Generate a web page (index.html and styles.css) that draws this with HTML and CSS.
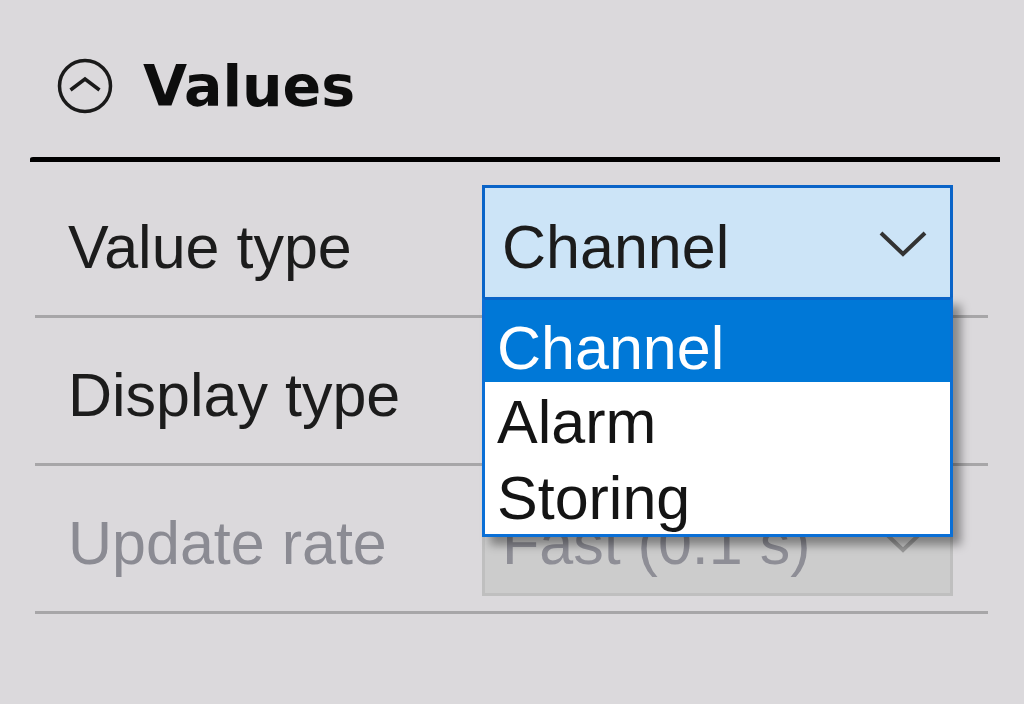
FILE: index.html
```html
<!DOCTYPE html>
<html>
<head>
<meta charset="utf-8">
<link rel="stylesheet" href="styles.css">
</head>
<body>
<div class="panel">
  <div class="header">
    <svg class="collapse-icon" width="56" height="56" viewBox="0 0 56 56">
      <circle cx="28" cy="28" r="25.5" fill="none" stroke="#1a1a1a" stroke-width="3.5"/>
      <path d="M13.5 32 L28 21 L42.5 32" fill="none" stroke="#1a1a1a" stroke-width="3.5"/>
    </svg>
    <div class="title">Values</div>
  </div>
  <div class="rule"></div>
  <div class="rows">
    <div class="row">
      <div class="label">Value type</div>
      <div class="combo-wrap">
        <div class="combo combo-open">
          <span class="combo-text">Channel</span>
          <svg class="chevron" width="48" height="26" viewBox="0 0 48 26">
            <path d="M2 2 L24 23 L46 2" fill="none" stroke="#333" stroke-width="4"/>
          </svg>
        </div>
        <div class="popup">
          <div class="item item-first selected">Channel</div>
          <div class="item">Alarm</div>
          <div class="item">Storing</div>
        </div>
      </div>
    </div>
    <div class="row">
      <div class="label">Display type</div>
      <div class="combo-wrap">
        <div class="combo">
          <span class="combo-text"></span>
          <svg class="chevron" width="48" height="26" viewBox="0 0 48 26">
            <path d="M2 2 L24 23 L46 2" fill="none" stroke="#333" stroke-width="4"/>
          </svg>
        </div>
      </div>
    </div>
    <div class="row">
      <div class="label disabled">Update rate</div>
      <div class="combo-wrap">
        <div class="combo combo-disabled">
          <span class="combo-text">Fast (0.1 s)</span>
          <svg class="chevron" width="48" height="26" viewBox="0 0 48 26">
            <path d="M2 2 L24 23 L46 2" fill="none" stroke="#9a9a9a" stroke-width="4"/>
          </svg>
        </div>
      </div>
    </div>
  </div>
</div>
</body>
</html>
```
FILE: styles.css
```css
html, body {
  margin: 0;
  padding: 0;
}
body {
  background: #dbd9dc;
  width: 1024px;
  height: 704px;
  overflow: hidden;
  font-family: "Liberation Sans", Arial, sans-serif;
  font-size: 61px;
  color: #1c1c1c;
}
.panel {
  display: flex;
  flex-direction: column;
}
.header {
  display: flex;
  align-items: center;
  padding-top: 58px;
  padding-left: 57px;
  gap: 30px;
  height: 56px;
}
.collapse-icon {
  display: block;
  flex: none;
}
.title {
  font-family: "DejaVu Sans", Verdana, sans-serif;
  font-weight: bold;
  font-size: 57px;
  color: #0d0d0d;
}
.rule {
  margin-top: 43px;
  margin-left: 30px;
  width: 970px;
  height: 5px;
  background: #000;
  border-top-left-radius: 3px 2px;
}
.rows {
  margin-top: 8px;
  margin-left: 35px;
  width: 953px;
  display: flex;
  flex-direction: column;
}
.row {
  height: 145px;
  border-bottom: 3px solid #a7a6a8;
  display: flex;
  align-items: center;
}
.label {
  width: 414px;
  padding-left: 33px;
  padding-top: 8px;
  flex: none;
  white-space: nowrap;
}
.label.disabled {
  color: #8b8b93;
}
.combo-wrap {
  position: relative;
  width: 471px;
  height: 115px;
}
.combo {
  box-sizing: border-box;
  width: 471px;
  height: 115px;
  border: 3px solid #adadad;
  background: #e1e1e1;
  display: flex;
  align-items: center;
  justify-content: space-between;
  padding-left: 17px;
  padding-right: 23px;
}
.combo-text {
  padding-top: 8px;
  white-space: nowrap;
}
.combo-open {
  border-color: #0a64c8;
  background: #cce4f7;
}
.combo-disabled {
  border-color: #bfbfbf;
  background: #cccccc;
  color: #8e8e96;
}
.chevron {
  display: block;
  flex: none;
  margin-top: 2px;
}
.popup {
  position: absolute;
  left: 0;
  top: 112px;
  box-sizing: border-box;
  width: 471px;
  border: 3px solid #0a6fd6;
  border-top: 3px solid #0a64c8;
  background: #ffffff;
  box-shadow: 8px 8px 9px rgba(0, 0, 0, 0.38);
  display: flex;
  flex-direction: column;
  z-index: 5;
}
.item {
  box-sizing: border-box;
  height: 76px;
  line-height: 61px;
  padding-top: 10px;
  padding-left: 12px;
  color: #141414;
  white-space: nowrap;
}
.item-first {
  height: 82px;
  padding-top: 18px;
}
.item.selected {
  background: #0078d7;
  color: #ffffff;
}
```
